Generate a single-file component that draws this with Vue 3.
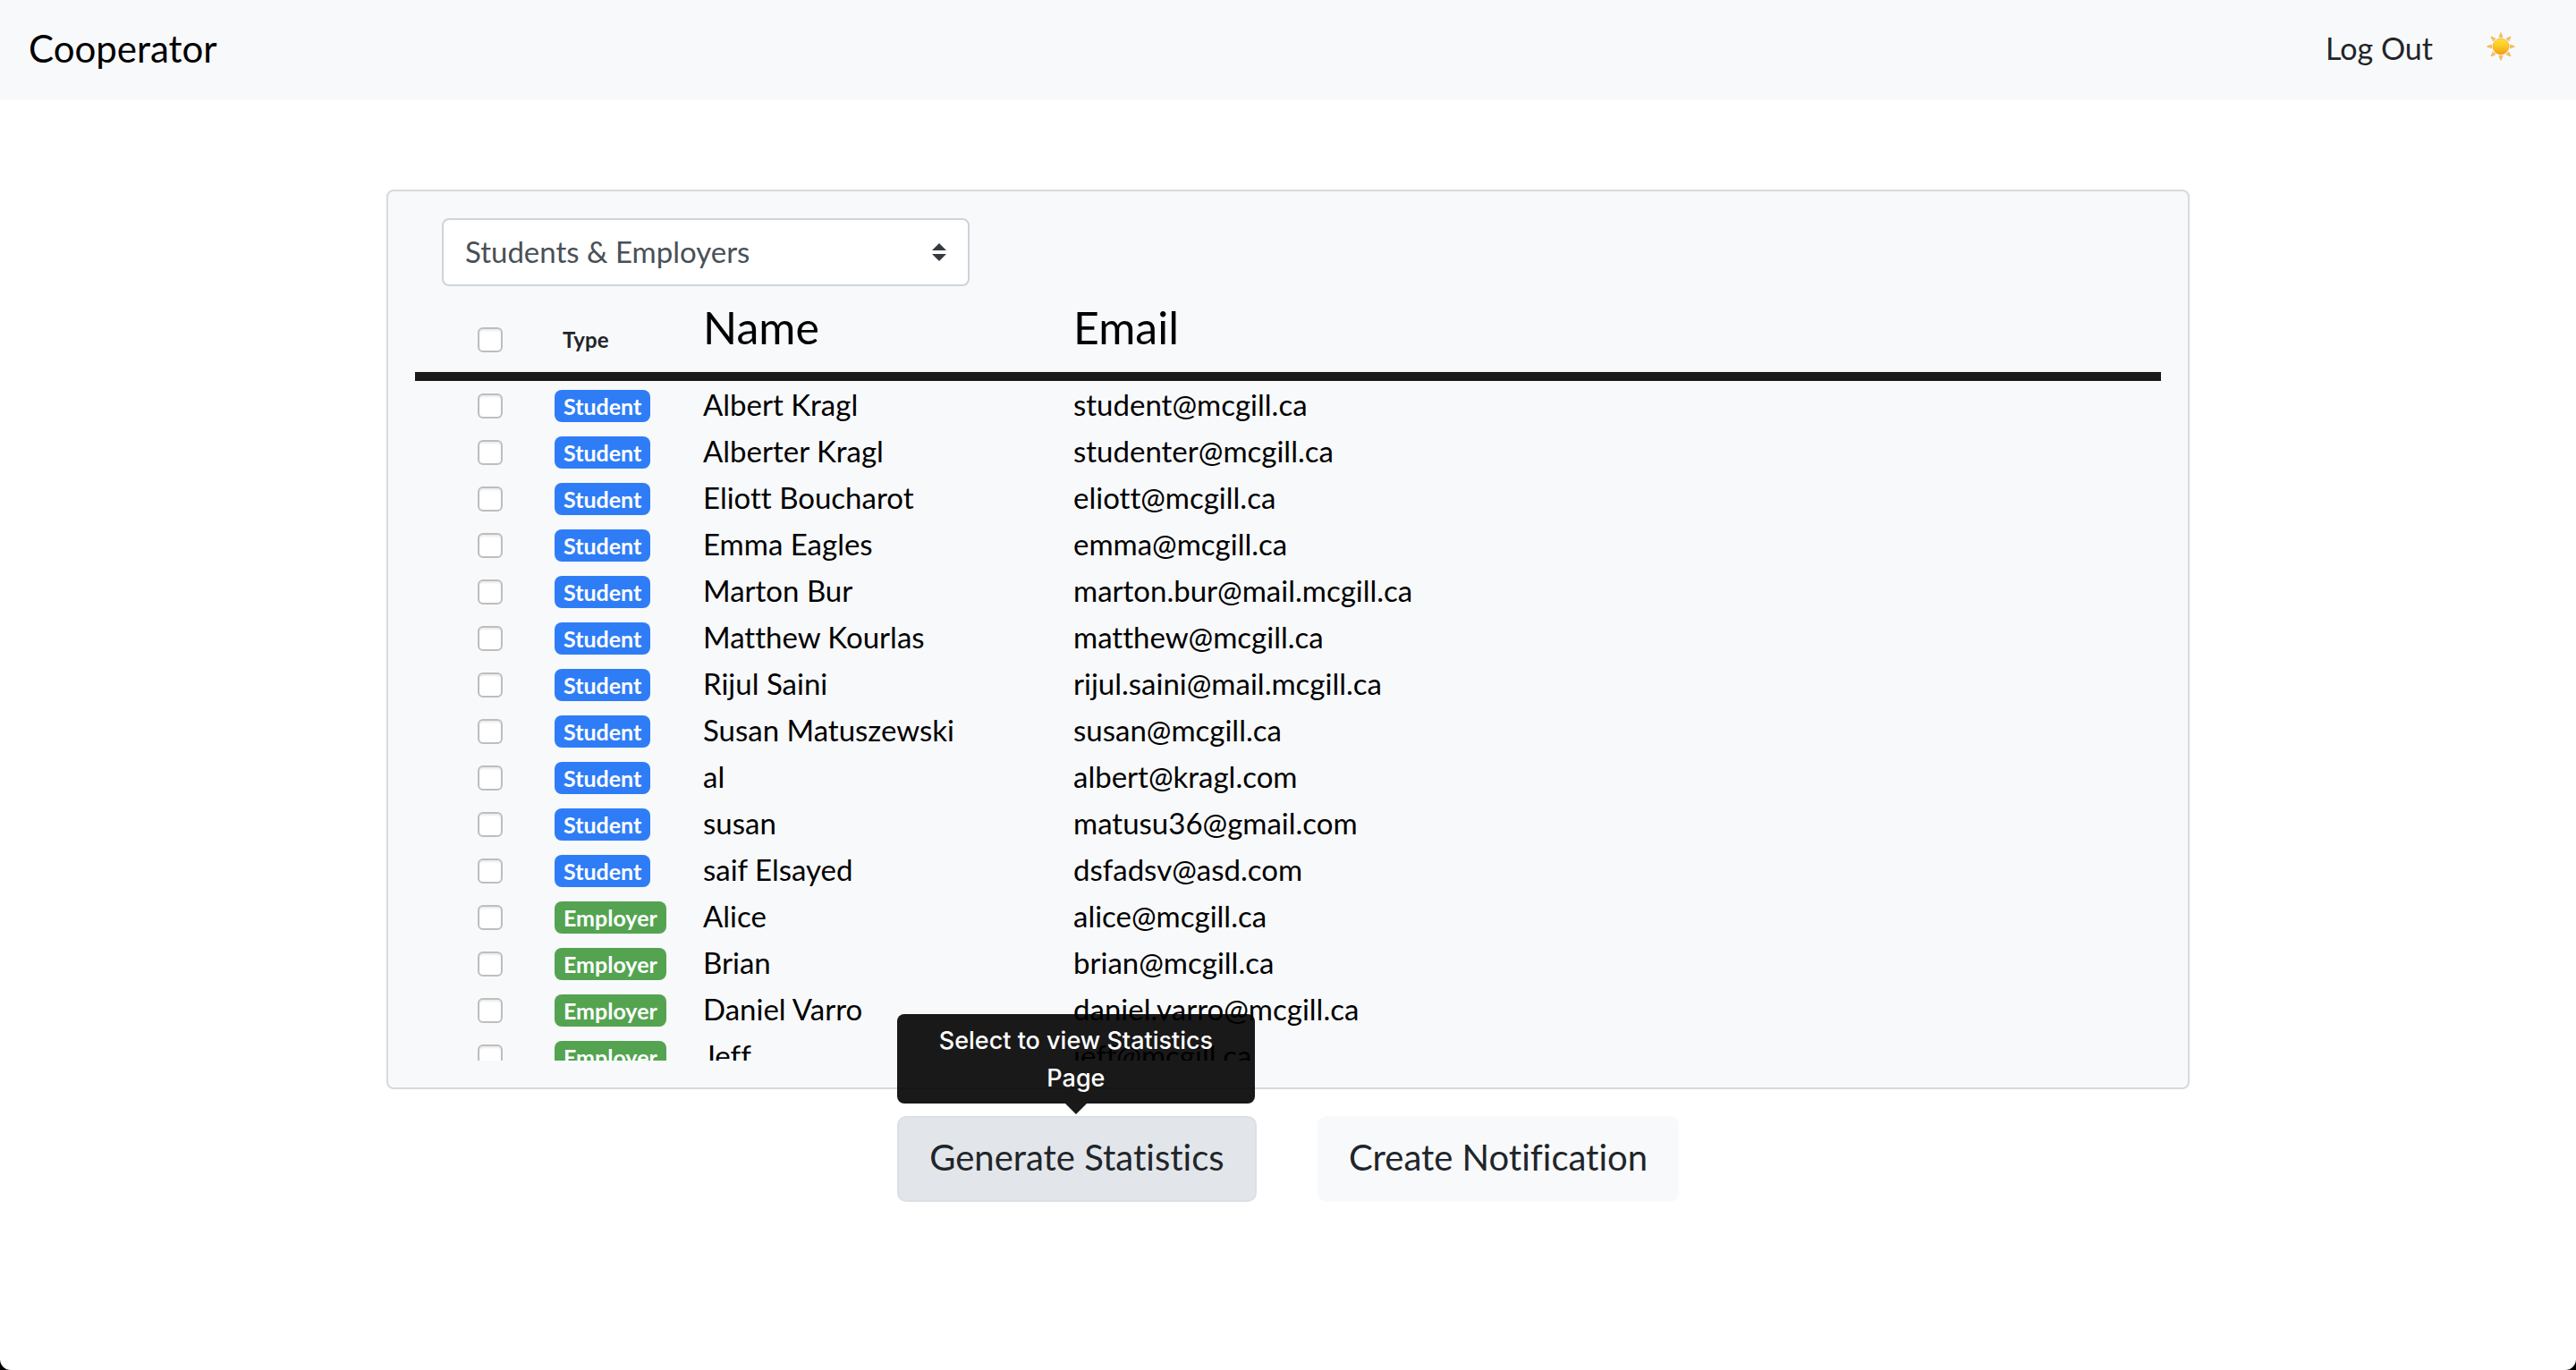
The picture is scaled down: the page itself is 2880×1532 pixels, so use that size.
<script setup>
import { ref } from 'vue'

const filter = ref('Students & Employers')
const filters = ['Students & Employers', 'Students', 'Employers']

const people = [
  ['Student', 'Albert Kragl', 'student@mcgill.ca'],
  ['Student', 'Alberter Kragl', 'studenter@mcgill.ca'],
  ['Student', 'Eliott Boucharot', 'eliott@mcgill.ca'],
  ['Student', 'Emma Eagles', 'emma@mcgill.ca'],
  ['Student', 'Marton Bur', 'marton.bur@mail.mcgill.ca'],
  ['Student', 'Matthew Kourlas', 'matthew@mcgill.ca'],
  ['Student', 'Rijul Saini', 'rijul.saini@mail.mcgill.ca'],
  ['Student', 'Susan Matuszewski', 'susan@mcgill.ca'],
  ['Student', 'al', 'albert@kragl.com'],
  ['Student', 'susan', 'matusu36@gmail.com'],
  ['Student', 'saif Elsayed', 'dsfadsv@asd.com'],
  ['Employer', 'Alice', 'alice@mcgill.ca'],
  ['Employer', 'Brian', 'brian@mcgill.ca'],
  ['Employer', 'Daniel Varro', 'daniel.varro@mcgill.ca'],
  ['Employer', 'Jeff', 'jeff@mcgill.ca']
].map(([type, name, email]) => ({ type, name, email }))

const rays = [0, 45, 90, 135, 180, 225, 270, 315]
</script>

<template>
  <div class="page">
    <header class="navbar">
      <a class="brand" href="#">Cooperator</a>
      <nav class="nav">
        <a class="nav-link" href="#">Log Out</a>
        <button class="theme" type="button" aria-label="Theme">
          <svg width="32" height="32" viewBox="0 0 32 32">
            <defs>
              <linearGradient id="sun" x1="0" y1="0" x2="0" y2="1">
                <stop offset="0" stop-color="#fde03c" />
                <stop offset="0.5" stop-color="#fcc921" />
                <stop offset="1" stop-color="#f59a12" />
              </linearGradient>
            </defs>
            <path
              v-for="angle in rays"
              :key="angle"
              d="M16 .5 L18 5.3 Q16 6.2 14 5.3 Z"
              fill="#fbc94f"
              stroke="#e9a345"
              stroke-width=".6"
              :transform="`rotate(${angle} 16 16)`"
            />
            <circle cx="16" cy="16" r="9" fill="url(#sun)" stroke="#eda028" stroke-width=".6" />
          </svg>
        </button>
      </nav>
    </header>

    <main class="content">
      <section class="panel">
        <select v-model="filter" class="filter" aria-label="Show">
          <option v-for="option in filters" :key="option">{{ option }}</option>
        </select>
        <div class="list">
          <table class="people">
            <thead>
              <tr>
                <th class="col-check"><input class="check" type="checkbox" aria-label="Select all" /></th>
                <th class="col-type">Type</th>
                <th class="col-name">Name</th>
                <th class="col-email">Email</th>
              </tr>
            </thead>
            <tbody>
              <tr v-for="(person, i) in people" :key="person.email">
                <td class="col-check">
                  <input class="check" type="checkbox" :aria-labelledby="`person-${i}`" />
                </td>
                <td><span class="badge" :class="person.type.toLowerCase()">{{ person.type }}</span></td>
                <td :id="`person-${i}`">{{ person.name }}</td>
                <td>{{ person.email }}</td>
              </tr>
            </tbody>
          </table>
        </div>
      </section>

      <div class="actions">
        <div class="action">
          <button class="btn active" type="button" aria-describedby="statistics-tip">Generate Statistics</button>
          <div id="statistics-tip" class="tooltip" role="tooltip">Select to view Statistics Page</div>
        </div>
        <button class="btn" type="button">Create Notification</button>
      </div>
    </main>
  </div>
</template>

<style>
html {
  background: #000;
}
</style>

<style scoped>
.page {
  box-sizing: border-box;
  min-height: 100vh;
  background: #fff;
  border-radius: 0 0 12px 12px;
  color: #212529;
  font-family: Lato, "Liberation Sans", sans-serif;
  font-size: 33px;
  font-variant-ligatures: none;
  line-height: 52px;
}

.navbar {
  display: flex;
  align-items: center;
  justify-content: space-between;
  height: 112px;
  padding: 0 68px 4px 32px;
  background: #f8f9fb;
  box-sizing: border-box;
}

.brand {
  color: #000;
  font-size: 42px;
  text-decoration: none;
}

.nav {
  display: flex;
  align-items: center;
  gap: 60px;
}

.nav-link {
  color: #212529;
  font-size: 34px;
  text-decoration: none;
}

.theme {
  display: flex;
  padding: 0 0 4px;
  border: 0;
  background: none;
}

.content {
  display: flex;
  flex-direction: column;
  align-items: center;
  padding-top: 100px;
}

.panel {
  box-sizing: border-box;
  width: 70%;
  padding: 30px;
  border: 2px solid #d8d9db;
  border-radius: 8px;
  background: #f8f9fb;
}

.filter {
  display: block;
  box-sizing: border-box;
  width: 590px;
  height: 76px;
  margin-left: 30px;
  padding: 0 24px 2px;
  border: 2px solid #ced4da;
  border-radius: 8px;
  appearance: none;
  background: #fff url("data:image/svg+xml,%3Csvg xmlns='http://www.w3.org/2000/svg' viewBox='0 0 4 5'%3E%3Cpath fill='%23343a40' d='M2 0L0 2h4zm0 5L0 3h4z'/%3E%3C/svg%3E") no-repeat right 24px center / 16px 20px;
  color: #495057;
  font: inherit;
}

.list {
  max-height: 866px;
  overflow-y: auto;
  scrollbar-width: none;
}

.people {
  width: 100%;
  border-collapse: separate;
  border-spacing: 0;
  table-layout: fixed;
  color: #000;
}

th,
td {
  padding: 0;
  text-align: left;
}

td {
  height: 52px;
  box-sizing: border-box;
  line-height: 48px;
  vertical-align: middle;
}

th {
  height: 106px;
  box-sizing: border-box;
  padding-bottom: 4px;
  border-bottom: 10px solid #1a1a1a;
  font-size: 50px;
  font-weight: 400;
  vertical-align: middle;
}

.col-check {
  width: 156px;
  padding-left: 70px;
  box-sizing: border-box;
}

th.col-type {
  width: 166px;
  padding-left: 9px;
  padding-top: 28px;
  box-sizing: border-box;
  color: #212529;
  font-size: 24px;
  font-weight: 700;
}

th.col-check {
  padding-top: 24px;
}

.col-name {
  width: 414px;
}

.check {
  display: block;
  width: 28px;
  height: 28px;
  margin: 4px 0 0;
  border: 2px solid #bdbebf;
  border-radius: 6px;
  box-sizing: border-box;
  appearance: none;
  background: #fff;
  box-shadow: inset 0 2px 2px #ececec;
}

.badge {
  display: block;
  width: max-content;
  margin-top: 4px;
  padding: 0 10px;
  border-radius: 8px;
  color: #fff;
  font-size: 25px;
  font-weight: 700;
  line-height: 36px;
}

.student {
  background: #2f7df6;
}

.employer {
  background: #54a351;
}

.actions {
  display: flex;
  gap: 68px;
  margin-top: 30px;
}

.action {
  position: relative;
}

.btn {
  min-width: 402px;
  height: 96px;
  padding: 0 33px 4px;
  border: 2px solid #f8f9fb;
  border-radius: 10px;
  background: #f8f9fb;
  color: #212529;
  font: inherit;
  font-size: 40px;
  font-variant-ligatures: none;
}

.btn.active {
  border-color: #dae0e5;
  background: #e2e6ea;
}

.tooltip {
  position: absolute;
  bottom: calc(100% + 14px);
  left: 0;
  box-sizing: border-box;
  width: 400px;
  padding: 9px 16px 7px;
  border-radius: 8px;
  background: rgba(0, 0, 0, 0.9);
  color: #fff;
  font-family: Inter, "Liberation Sans", sans-serif;
  font-size: 27px;
  font-weight: 500;
  line-height: 42px;
  text-align: center;
}

.tooltip::after {
  content: "";
  position: absolute;
  top: 100%;
  left: 50%;
  margin-left: -12px;
  border: 12px solid transparent;
  border-top-color: rgba(0, 0, 0, 0.9);
  border-bottom: 0;
}
</style>
